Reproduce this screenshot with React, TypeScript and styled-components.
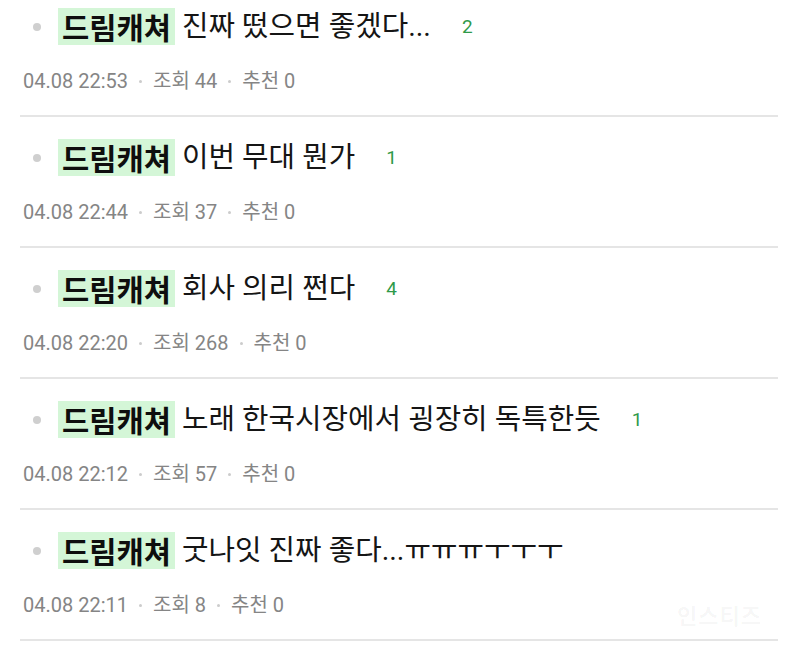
import React from "react";
import styled, { createGlobalStyle } from "styled-components";

const GlobalStyle = createGlobalStyle`
  html, body {
    margin: 0;
    padding: 0;
    background: #ffffff;
  }
  body {
    width: 800px;
    height: 662px;
    overflow: hidden;
    font-family: Roboto, "Noto Sans CJK KR", sans-serif;
  }
`;

const Page = styled.div`
  position: relative;
  width: 800px;
  height: 662px;
  overflow: hidden;
  background: #ffffff;
`;

const List = styled.ul`
  list-style: none;
  margin: -14px 0 0 0;
  padding: 0 22px 0 20px;
`;

const Row = styled.li`
  padding: 22px 0 22px;
  border-bottom: 2px solid #e5e5e5;
`;

const TitleLine = styled.div`
  display: flex;
  align-items: center;
  height: 37px;
`;

const Bullet = styled.span`
  width: 8px;
  height: 8px;
  border-radius: 50%;
  background: #cfcfcf;
  margin-left: 13px;
  margin-right: 17px;
  flex-shrink: 0;
`;

const Tag = styled.span`
  display: inline-block;
  background: #d4f6d7;
  color: #0e0e0e;
  font-family: "Noto Sans CJK KR", sans-serif;
  font-weight: 700;
  font-size: 29.6px;
  line-height: 37px;
  padding: 0 4px 0 4px;
  white-space: nowrap;
`;

const Title = styled.span`
  margin-left: 7px;
  color: #151515;
  font-family: Roboto, "Noto Sans CJK KR", sans-serif;
  font-size: 28.8px;
  line-height: 37px;
  white-space: nowrap;
`;

const Count = styled.span`
  margin-left: 31px;
  color: #2f9a4a;
  font-family: Roboto, sans-serif;
  font-size: 19px;
  line-height: 37px;
`;

const Meta = styled.div`
  display: flex;
  align-items: center;
  margin-top: 24px;
  margin-left: 3px;
  height: 24px;
  color: #858585;
  font-family: Roboto, "Noto Sans CJK KR", sans-serif;
  font-size: 20px;
  line-height: 24px;
  white-space: nowrap;
`;

const Dot = styled.span`
  width: 3px;
  height: 3px;
  border-radius: 50%;
  background: #cccccc;
  margin: 0 11px 0 11px;
`;

const Watermark = styled.div`
  position: absolute;
  right: 38px;
  bottom: 32px;
  font-family: "Noto Sans CJK KR", sans-serif;
  font-weight: 700;
  font-size: 22px;
  color: rgba(0, 0, 0, 0.045);
  letter-spacing: 1px;
  pointer-events: none;
`;

type Post = {
  title: string;
  count?: number;
  date: string;
  views: number;
  likes: number;
};

const posts: Post[] = [
  { title: "진짜 떴으면 좋겠다...", count: 2, date: "04.08 22:53", views: 44, likes: 0 },
  { title: "이번 무대 뭔가", count: 1, date: "04.08 22:44", views: 37, likes: 0 },
  { title: "회사 의리 쩐다", count: 4, date: "04.08 22:20", views: 268, likes: 0 },
  { title: "노래 한국시장에서 굉장히 독특한듯", count: 1, date: "04.08 22:12", views: 57, likes: 0 },
  { title: "굿나잇 진짜 좋다...ㅠㅠㅠㅜㅜㅜ", date: "04.08 22:11", views: 8, likes: 0 },
];

export default function App() {
  return (
    <Page>
      <GlobalStyle />
      <List>
        {posts.map((p, i) => (
          <Row key={i}>
            <TitleLine>
              <Bullet />
              <Tag>드림캐쳐</Tag>
              <Title>{p.title}</Title>
              {p.count !== undefined && <Count>{p.count}</Count>}
            </TitleLine>
            <Meta>
              <span>{p.date}</span>
              <Dot />
              <span>조회 {p.views}</span>
              <Dot />
              <span>추천 {p.likes}</span>
            </Meta>
          </Row>
        ))}
      </List>
      <Watermark>인스티즈</Watermark>
    </Page>
  );
}
